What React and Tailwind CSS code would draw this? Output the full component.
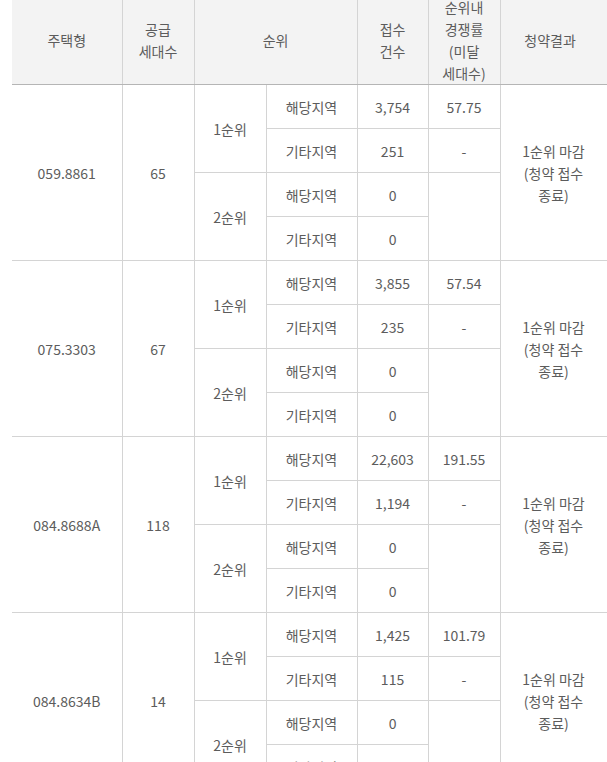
import React from 'react'

const groups = [
  { type: '059.8861', units: 65, r1: ['3,754', '251'], rate: '57.75', r2: ['0', '0'] },
  { type: '075.3303', units: 67, r1: ['3,855', '235'], rate: '57.54', r2: ['0', '0'] },
  { type: '084.8688A', units: 118, r1: ['22,603', '1,194'], rate: '191.55', r2: ['0', '0'] },
  { type: '084.8634B', units: 14, r1: ['1,425', '115'], rate: '101.79', r2: ['0', '0'] },
]

const td = 'border border-[#d4d4d4] text-center align-middle p-0'

function Group({ g }) {
  return (
    <>
      <tr className="h-[44px]">
        <td rowSpan={4} className={td}>{g.type}</td>
        <td rowSpan={4} className={td}>{g.units}</td>
        <td rowSpan={2} className={td}>1순위</td>
        <td className={td}>해당지역</td>
        <td className={td}>{g.r1[0]}</td>
        <td className={td}>{g.rate}</td>
        <td rowSpan={4} className={td + ' pr-[25px]'}>
          1순위 마감
          <br />
          (청약 접수
          <br />
          종료)
        </td>
      </tr>
      <tr className="h-[44px]">
        <td className={td}>기타지역</td>
        <td className={td}>{g.r1[1]}</td>
        <td className={td}>-</td>
      </tr>
      <tr className="h-[44px]">
        <td rowSpan={2} className={td}>2순위</td>
        <td className={td}>해당지역</td>
        <td className={td}>{g.r2[0]}</td>
        <td rowSpan={2} className={td}></td>
      </tr>
      <tr className="h-[44px]">
        <td className={td}>기타지역</td>
        <td className={td}>{g.r2[1]}</td>
      </tr>
    </>
  )
}

export default function App() {
  const th = 'border border-[#d4d4d4] border-b-[#b5b5b5] bg-[#f3f3f3] font-normal text-center align-middle p-0'
  return (
    <div className="w-[607px] h-[762px] overflow-hidden bg-white">
      <table
        className="ml-[12px] -mt-[6px] w-[620px] table-fixed border-collapse border-l-0 text-[14px] leading-[22px] text-[#5c5c5c]"
        style={{ fontFamily: '"Noto Sans CJK KR", "Noto Sans", sans-serif' }}
      >
        <colgroup>
          <col className="w-[110px]" />
          <col className="w-[72px]" />
          <col className="w-[72px]" />
          <col className="w-[91px]" />
          <col className="w-[71px]" />
          <col className="w-[72px]" />
          <col className="w-[132px]" />
        </colgroup>
        <thead>
          <tr className="h-[90px]">
            <th className={th + ' border-l-0'}>주택형</th>
            <th className={th}>
              공급
              <br />
              세대수
            </th>
            <th colSpan={2} className={th}>순위</th>
            <th className={th}>
              접수
              <br />
              건수
            </th>
            <th className={th}>
              순위내
              <br />
              경쟁률
              <br />
              (미달
              <br />
              세대수)
            </th>
            <th className={th + ' pr-[32px]'}>청약결과</th>
          </tr>
        </thead>
        <tbody className="[&_tr>td:first-child]:border-l-0">
          {groups.map((g) => (
            <Group key={g.type} g={g} />
          ))}
        </tbody>
      </table>
    </div>
  )
}
